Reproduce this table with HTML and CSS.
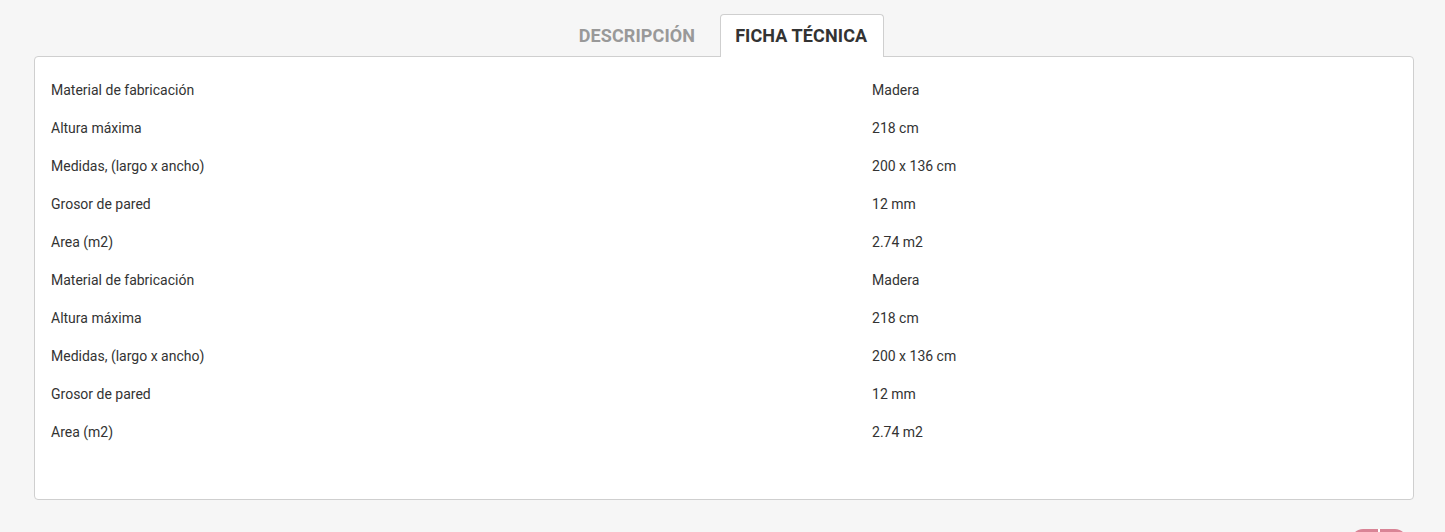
FILE: index.html
```html
<!DOCTYPE html>
<html lang="es">
<head>
<meta charset="utf-8">
<title>Ficha técnica</title>
<link rel="stylesheet" href="styles.css">
</head>
<body>
<section class="product-tabs">
  <nav class="tab-list">
    <div class="tab">Descripción</div>
    <div class="tab tab-active">Ficha técnica</div>
  </nav>
  <div class="tab-panel">
    <div class="spec-table">
      <div class="spec-row"><span class="spec-name">Material de fabricación</span><span class="spec-value">Madera</span></div>
      <div class="spec-row"><span class="spec-name">Altura máxima</span><span class="spec-value">218 cm</span></div>
      <div class="spec-row"><span class="spec-name">Medidas, (largo x ancho)</span><span class="spec-value">200 x 136 cm</span></div>
      <div class="spec-row"><span class="spec-name">Grosor de pared</span><span class="spec-value">12 mm</span></div>
      <div class="spec-row"><span class="spec-name">Area (m2)</span><span class="spec-value">2.74 m2</span></div>
      <div class="spec-row"><span class="spec-name">Material de fabricación</span><span class="spec-value">Madera</span></div>
      <div class="spec-row"><span class="spec-name">Altura máxima</span><span class="spec-value">218 cm</span></div>
      <div class="spec-row"><span class="spec-name">Medidas, (largo x ancho)</span><span class="spec-value">200 x 136 cm</span></div>
      <div class="spec-row"><span class="spec-name">Grosor de pared</span><span class="spec-value">12 mm</span></div>
      <div class="spec-row"><span class="spec-name">Area (m2)</span><span class="spec-value">2.74 m2</span></div>
    </div>
  </div>
</section>
<div class="float-button"><span class="float-divider"></span></div>
</body>
</html>
```

FILE: styles.css
```css
html, body {
  margin: 0;
  padding: 0;
}
body {
  background: #f6f6f6;
  font-family: Roboto, "Liberation Sans", Arial, sans-serif;
  color: #333;
  overflow: hidden;
}
.product-tabs {
  margin: 14px 31px 0 34px;
}
.tab-list {
  display: flex;
  justify-content: center;
  gap: 8px;
  margin-bottom: -1px;
  position: relative;
  z-index: 1;
}
.tab {
  box-sizing: border-box;
  height: 43px;
  padding: 0 16px 0 14px;
  border: 1px solid transparent;
  border-bottom: none;
  border-radius: 4px 4px 0 0;
  font-size: 18px;
  font-weight: 700;
  line-height: 41px;
  letter-spacing: 0.1px;
  text-transform: uppercase;
  color: #999;
}
.tab-active {
  background: #fff;
  border-color: #cfcfcf;
  color: #333;
}
.tab-panel {
  background: #fff;
  border: 1px solid #cfcfcf;
  border-radius: 4px;
  padding: 14px 16px 48px;
}
.spec-row {
  display: grid;
  grid-template-columns: 61% 1fr;
  height: 38px;
  align-items: center;
  font-size: 14px;
  color: #333;
}
.float-button {
  position: fixed;
  left: 1351px;
  top: 529px;
  width: 56px;
  height: 48px;
  border-radius: 12px;
  background: #d98496;
  display: flex;
  justify-content: center;
}
.float-divider {
  width: 2px;
  background: #fff;
}
```
